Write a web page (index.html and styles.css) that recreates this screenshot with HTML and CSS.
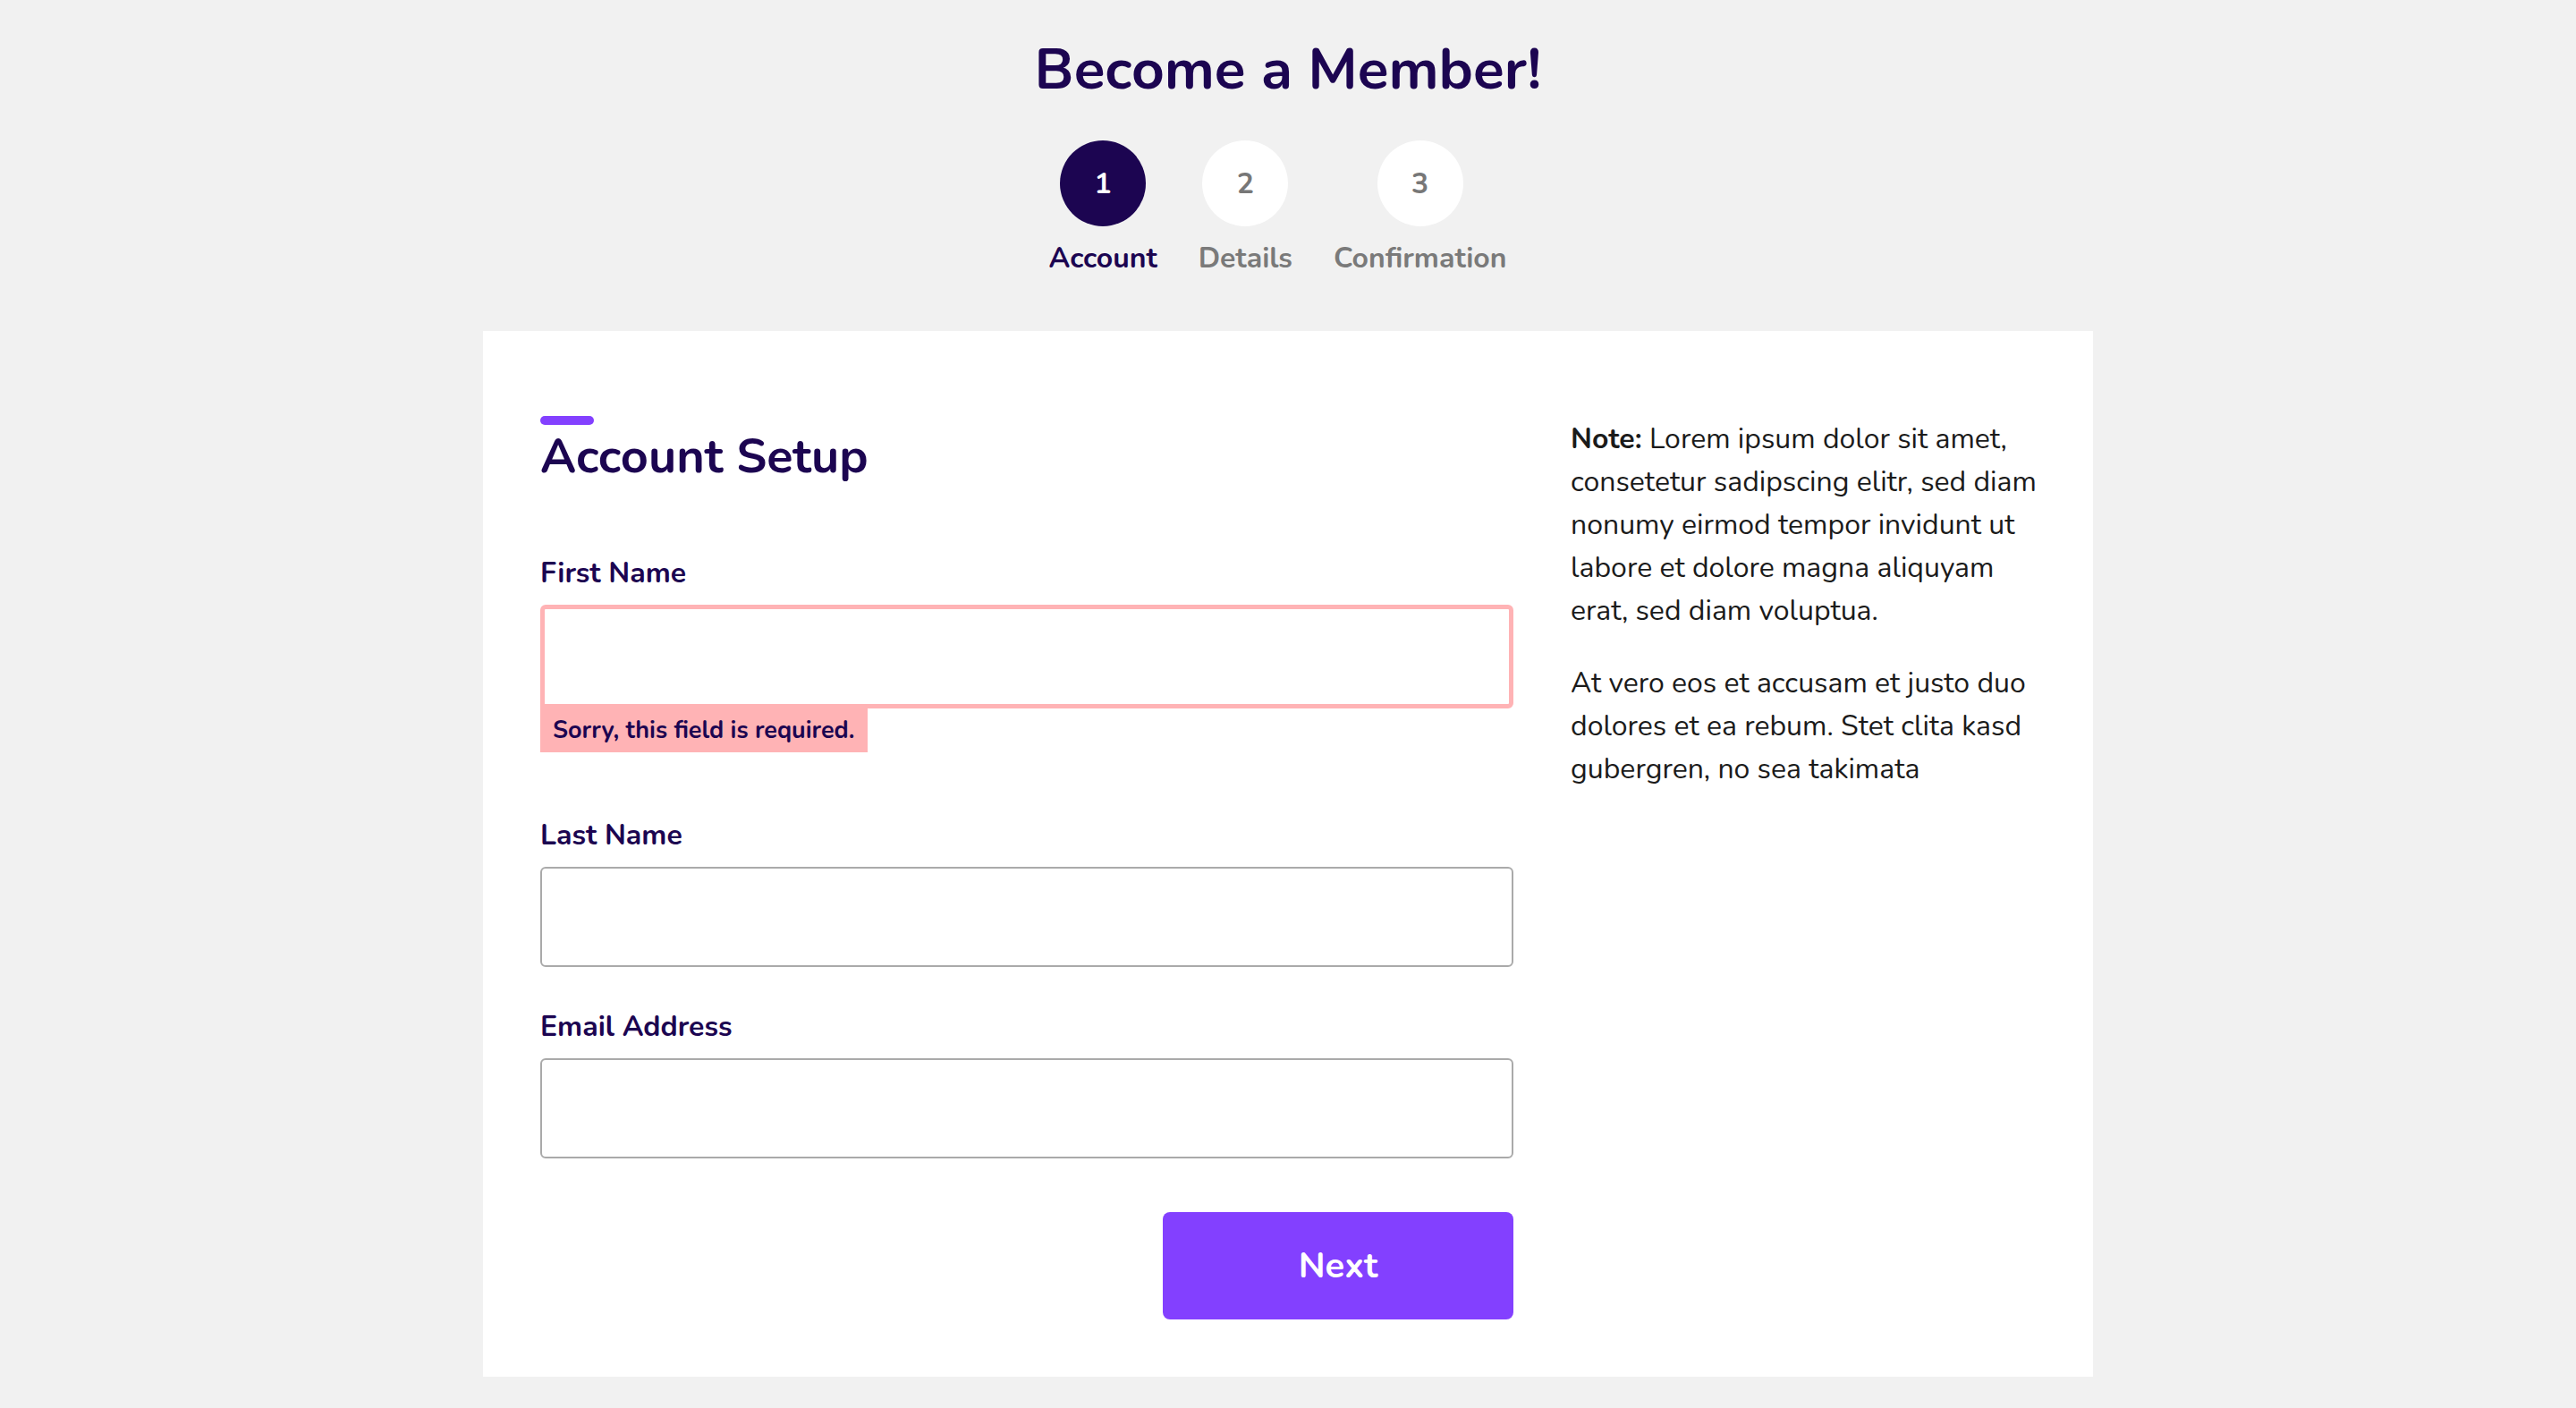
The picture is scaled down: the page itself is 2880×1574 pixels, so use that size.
FILE: index.html
```html
<!DOCTYPE html>
<html lang="en">
<head>
<meta charset="utf-8">
<title>Become a Member!</title>
<link rel="stylesheet" href="styles.css">
</head>
<body>
  <header class="page-header">
    <h1 class="page-title">Become a Member!</h1>
    <ol class="steps">
      <li class="step step-active">
        <span class="step-circle">1</span>
        <span class="step-label">Account</span>
      </li>
      <li class="step">
        <span class="step-circle">2</span>
        <span class="step-label">Details</span>
      </li>
      <li class="step">
        <span class="step-circle">3</span>
        <span class="step-label">Confirmation</span>
      </li>
    </ol>
  </header>

  <main class="card">
    <form class="form-col" novalidate>
      <span class="accent"></span>
      <h2 class="section-title">Account Setup</h2>

      <div class="field field-error">
        <label class="field-label" for="first">First Name</label>
        <input class="field-input" id="first" type="text">
        <span class="error-msg">Sorry, this field is required.</span>
      </div>

      <div class="field">
        <label class="field-label" for="last">Last Name</label>
        <input class="field-input" id="last" type="text">
      </div>

      <div class="field field-last">
        <label class="field-label" for="email">Email Address</label>
        <input class="field-input" id="email" type="email">
      </div>

      <div class="actions">
        <button class="btn-next" type="button">Next</button>
      </div>
    </form>

    <aside class="note-col">
      <p class="note-text"><strong>Note:</strong> Lorem ipsum dolor sit amet, consetetur sadipscing elitr, sed diam nonumy eirmod tempor invidunt ut labore et dolore magna aliquyam erat, sed diam voluptua.</p>
      <p class="note-text">At vero eos et accusam et justo duo dolores et ea rebum. Stet clita kasd gubergren, no sea takimata</p>
    </aside>
  </main>
</body>
</html>
```

FILE: styles.css
```css
* {
  box-sizing: border-box;
}

html,
body {
  margin: 0;
  padding: 0;
}

body {
  background: #f1f1f1;
  font-family: "Nunito", "Lato", "Noto Sans", sans-serif;
  color: #1c0551;
  padding-top: 40px;
}

.page-header {
  text-align: center;
}

.page-title {
  margin: 0;
  font-size: 64px;
  line-height: 76px;
  font-weight: 700;
  color: #1c0551;
}

.steps {
  list-style: none;
  margin: 41px 0 0;
  padding: 0 23px 0 0;
  display: flex;
  justify-content: center;
  gap: 46px;
}

.step {
  display: flex;
  flex-direction: column;
  align-items: center;
}

.step-circle {
  width: 96px;
  height: 96px;
  border-radius: 50%;
  background: #ffffff;
  color: #777777;
  display: flex;
  align-items: center;
  justify-content: center;
  font-size: 32px;
  font-weight: 700;
}

.step-label {
  margin-top: 12px;
  font-size: 32px;
  line-height: 48px;
  font-weight: 700;
  color: #7a7a7a;
}

.step-active .step-circle {
  background: #1c0551;
  color: #ffffff;
}

.step-active .step-label {
  color: #1c0551;
}

.card {
  width: 1800px;
  margin: 57px auto 0;
  background: #ffffff;
  padding: 95px 64px 64px;
  display: grid;
  grid-template-columns: 1088px 1fr;
  gap: 64px;
}

.form-col {
  display: flex;
  flex-direction: column;
  margin: 0;
}

.accent {
  display: block;
  width: 60px;
  height: 10px;
  border-radius: 5px;
  background: #8340ff;
}

.section-title {
  margin: 0 0 72px;
  font-size: 54px;
  line-height: 70px;
  font-weight: 700;
  color: #1c0551;
}

.field {
  display: flex;
  flex-direction: column;
  align-items: flex-start;
  margin-bottom: 43px;
}

.field-error {
  margin-bottom: 69px;
}

.field-last {
  margin-bottom: 0;
}

.field-label {
  font-size: 32px;
  line-height: 48px;
  font-weight: 700;
  color: #1c0551;
  margin-bottom: 11px;
}

.field-input {
  display: block;
  width: 100%;
  height: 112px;
  border: 2px solid #aaaaaa;
  border-radius: 6px;
  background: #ffffff;
  font-family: inherit;
  font-size: 32px;
  padding: 0 24px;
  outline: none;
}

.field-error .field-input {
  height: 116px;
  border: 5px solid #ffb3b5;
  border-bottom-left-radius: 0;
}

.error-msg {
  display: block;
  height: 49px;
  line-height: 49px;
  padding: 0 14px;
  background: #ffb3b5;
  font-size: 27px;
  font-weight: 700;
  color: #1c0551;
}

.actions {
  display: flex;
  justify-content: flex-end;
  margin-top: 60px;
}

.btn-next {
  width: 392px;
  height: 120px;
  border: none;
  border-radius: 8px;
  background: #8340ff;
  color: #ffffff;
  font-family: inherit;
  font-size: 40px;
  font-weight: 700;
  cursor: pointer;
}

.note-col {
  color: #1b1b1b;
  padding-top: 2px;
  margin-right: -14px;
}

.note-text {
  margin: 0 0 33px;
  font-size: 32px;
  line-height: 48px;
}

.note-text strong {
  font-weight: 700;
}
```
